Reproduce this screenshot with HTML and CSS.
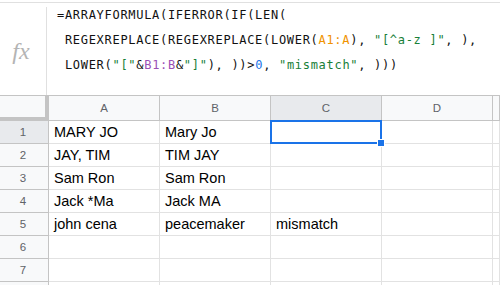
FILE: index.html
```html
<!DOCTYPE html>
<html lang="en">
<head>
  <meta charset="UTF-8">
  <title>Sheet</title>
  <link rel="stylesheet" href="styles.css">
</head>
<body>

  <!-- Formula bar -->
  <div class="formula-bar">
    <div class="fx">fx</div>
    <div class="formula">
      <div class="line">=ARRAYFORMULA(IFERROR(IF(LEN(</div>
      <div class="line"> REGEXREPLACE(REGEXREPLACE(LOWER(<span class="ref-a">A1:A</span>), <span class="str">"[^a-z ]"</span>, ),</div>
      <div class="line"> LOWER(<span class="str">"["</span>&amp;<span class="ref-b">B1:B</span>&amp;<span class="str">"]"</span>), ))&gt;<span class="num">0</span>, <span class="str">"mismatch"</span>, )))</div>
    </div>
  </div>

  <!-- Grid -->
  <div class="grid">
    <div class="corner"></div>
    <div class="col-head">A</div>
    <div class="col-head">B</div>
    <div class="col-head active">C</div>
    <div class="col-head">D</div>
    <div class="col-head"></div>

    <div class="row-head active">1</div>
    <div class="cell">MARY JO</div>
    <div class="cell">Mary Jo</div>
    <div class="cell selected"><span class="handle"></span></div>
    <div class="cell"></div>
    <div class="cell"></div>

    <div class="row-head">2</div>
    <div class="cell">JAY, TIM</div>
    <div class="cell">TIM JAY</div>
    <div class="cell"></div>
    <div class="cell"></div>
    <div class="cell"></div>

    <div class="row-head">3</div>
    <div class="cell">Sam Ron</div>
    <div class="cell">Sam Ron</div>
    <div class="cell"></div>
    <div class="cell"></div>
    <div class="cell"></div>

    <div class="row-head">4</div>
    <div class="cell">Jack *Ma</div>
    <div class="cell">Jack MA</div>
    <div class="cell"></div>
    <div class="cell"></div>
    <div class="cell"></div>

    <div class="row-head">5</div>
    <div class="cell">john cena</div>
    <div class="cell">peacemaker</div>
    <div class="cell">mismatch</div>
    <div class="cell"></div>
    <div class="cell"></div>

    <div class="row-head">6</div>
    <div class="cell"></div>
    <div class="cell"></div>
    <div class="cell"></div>
    <div class="cell"></div>
    <div class="cell"></div>

    <div class="row-head">7</div>
    <div class="cell"></div>
    <div class="cell"></div>
    <div class="cell"></div>
    <div class="cell"></div>
    <div class="cell"></div>

    <div class="row-head"></div>
    <div class="cell"></div>
    <div class="cell"></div>
    <div class="cell"></div>
    <div class="cell"></div>
    <div class="cell"></div>
  </div>

</body>
</html>
```

FILE: styles.css
```css
body {
  margin: 0;
  padding: 2px 0 0 0;
  background-color: #ffffff;
  overflow: hidden;
}

.formula-bar {
  display: flex;
  height: 92px;
  border-top: 1px solid #e0e0e0;
}

.fx {
  width: 47px;
  box-sizing: border-box;
  margin-top: 4px;
  border-right: 1px solid #e0e0e0;
  display: flex;
  align-items: center;
  justify-content: center;
  padding-right: 4px;
  font-family: "Liberation Serif", serif;
  font-style: italic;
  font-size: 24px;
  color: #b4b4b4;
}

.formula {
  padding-left: 10px;
  font-family: "DejaVu Sans Mono", monospace;
  font-size: 12px;
  letter-spacing: 0.7px;
  line-height: 25px;
  color: #111111;
}

.formula .line {
  white-space: pre;
}

.ref-a { color: #f09300; }
.ref-b { color: #9b4fb6; }
.str { color: #188038; }
.num { color: #1a73e8; }

/* Grid */
.grid {
  display: grid;
  grid-template-columns: 49px 111px 111px 111px 111px 7px;
  grid-template-rows: 26px repeat(8, 23px);
  font-family: "Liberation Sans", Arial, sans-serif;
}

.grid > div {
  box-sizing: border-box;
}

.corner {
  background-color: #f8f9fa;
  border-right: 4px solid #c4c4c4;
  border-bottom: 4px solid #c4c4c4;
  border-top: 1px solid #c4c4c4;
}

.col-head {
  background-color: #f8f9fa;
  border-top: 1px solid #c4c4c4;
  border-right: 1px solid #c4c4c4;
  border-bottom: 1px solid #c4c4c4;
  display: flex;
  align-items: center;
  justify-content: center;
  font-size: 11.5px;
  color: #5f6368;
}

.row-head {
  background-color: #f8f9fa;
  border-right: 1px solid #c4c4c4;
  border-bottom: 1px solid #c4c4c4;
  display: flex;
  align-items: center;
  justify-content: center;
  padding-right: 2px;
  font-size: 11.5px;
  color: #5f6368;
}

.col-head.active,
.row-head.active {
  background-color: #e8eaed;
}

.cell {
  border-right: 1px solid #e2e2e2;
  border-bottom: 1px solid #e2e2e2;
  padding-left: 5px;
  display: flex;
  align-items: center;
  font-size: 14.5px;
  color: #000000;
  white-space: nowrap;
  overflow: hidden;
}

.cell.selected {
  position: relative;
  overflow: visible;
  border: 2px solid #1a73e8;
  margin: -1px 0 0 -1px;
}

.handle {
  position: absolute;
  right: -5px;
  bottom: -5px;
  width: 6px;
  height: 6px;
  background-color: #1a73e8;
  border: 1px solid #ffffff;
}
```
